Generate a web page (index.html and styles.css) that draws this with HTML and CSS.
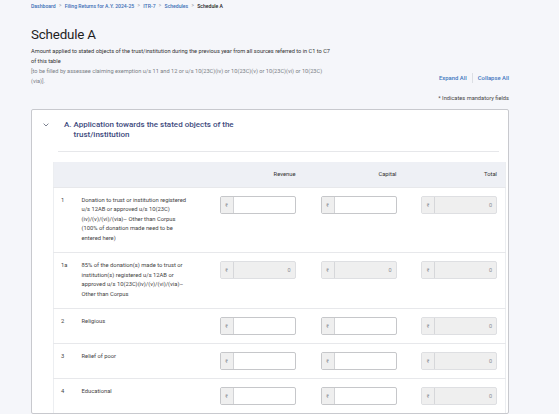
FILE: index.html
```html
<!DOCTYPE html>
<html lang="en">
<head>
<meta charset="utf-8">
<title>Schedule A</title>
<link rel="stylesheet" href="styles.css">
</head>
<body>
<div class="page">
  <nav class="crumbs">
    <a class="crumb">Dashboard</a><span class="sep">&gt;</span>
    <a class="crumb">Filing Returns for A.Y. 2024-25</a><span class="sep">&gt;</span>
    <a class="crumb">ITR-7</a><span class="sep">&gt;</span>
    <a class="crumb">Schedules</a><span class="sep">&gt;</span>
    <span class="crumb-current">Schedule A</span>
  </nav>

  <div class="head">
    <div class="intro">
      <h1 class="title">Schedule A</h1>
      <p class="desc">Amount applied to stated objects of the trust/institution during the previous year from all sources referred to in C1 to C7<br>of this table</p>
      <p class="note">[to be filled by assessee claiming exemption u/s 11 and 12 or u/s 10(23C)(iv) or 10(23C)(v) or 10(23C)(vi) or 10(23C)<br>(via)].</p>
    </div>
    <div class="actions">
      <a class="action">Expand All</a>
      <span class="action-bar"></span>
      <a class="action">Collapse All</a>
    </div>
  </div>

  <p class="mandatory">* Indicates mandatory fields</p>

  <section class="card">
    <div class="card-head">
      <svg class="chevron" viewBox="0 0 6 4" width="6" height="4" aria-hidden="true"><polyline points="0.6,0.6 3,3 5.4,0.6" fill="none" stroke="#5a6275" stroke-width="0.8"/></svg>
      <h2 class="card-title"><span class="card-num">A.</span><span class="card-text">Application towards the stated objects of the<br>trust/institution</span></h2>
    </div>
    <div class="divider"></div>

    <table class="grid">
      <colgroup>
        <col class="c-num"><col class="c-label"><col class="c-val"><col class="c-val"><col class="c-val">
      </colgroup>
      <thead>
        <tr>
          <th></th><th></th><th class="h-val">Revenue</th><th class="h-val">Capital</th><th class="h-val">Total</th>
        </tr>
      </thead>
      <tbody>
        <tr>
          <td class="num">1</td>
          <td class="label">Donation to trust or institution registered<br>u/s 12AB or approved u/s 10(23C)<br>(iv)/(v)/(vi)/(via)– Other than Corpus<br>(100% of donation made need to be<br>entered here)</td>
          <td class="val"><div class="field"><span class="pre">₹</span><span class="in"></span></div></td>
          <td class="val"><div class="field"><span class="pre">₹</span><span class="in"></span></div></td>
          <td class="val"><div class="field off"><span class="pre">₹</span><span class="in">0</span></div></td>
        </tr>
        <tr>
          <td class="num">1a</td>
          <td class="label">85% of the donation(s) made to trust or<br>institution(s) registered u/s 12AB or<br>approved u/s 10(23C)(iv)/(v)/(vi)/(via)–<br>Other than Corpus</td>
          <td class="val"><div class="field off"><span class="pre">₹</span><span class="in">0</span></div></td>
          <td class="val"><div class="field off"><span class="pre">₹</span><span class="in">0</span></div></td>
          <td class="val"><div class="field off"><span class="pre">₹</span><span class="in">0</span></div></td>
        </tr>
        <tr>
          <td class="num">2</td>
          <td class="label">Religious</td>
          <td class="val"><div class="field"><span class="pre">₹</span><span class="in"></span></div></td>
          <td class="val"><div class="field"><span class="pre">₹</span><span class="in"></span></div></td>
          <td class="val"><div class="field off"><span class="pre">₹</span><span class="in">0</span></div></td>
        </tr>
        <tr>
          <td class="num">3</td>
          <td class="label">Relief of poor</td>
          <td class="val"><div class="field"><span class="pre">₹</span><span class="in"></span></div></td>
          <td class="val"><div class="field"><span class="pre">₹</span><span class="in"></span></div></td>
          <td class="val"><div class="field off"><span class="pre">₹</span><span class="in">0</span></div></td>
        </tr>
        <tr>
          <td class="num">4</td>
          <td class="label">Educational</td>
          <td class="val"><div class="field"><span class="pre">₹</span><span class="in"></span></div></td>
          <td class="val"><div class="field"><span class="pre">₹</span><span class="in"></span></div></td>
          <td class="val"><div class="field off"><span class="pre">₹</span><span class="in">0</span></div></td>
        </tr>
      </tbody>
    </table>
  </section>
</div>
</body>
</html>
```

FILE: styles.css
```css
* { box-sizing: border-box; }
html, body { margin: 0; padding: 0; }
body {
  background: #f5f6fa;
  font-family: Roboto, "Liberation Sans", sans-serif;
  color: #333;
  overflow: hidden;
}
.page {
  width: 509px;
  padding: 2px 0 0 31px;
}

/* breadcrumb */
.crumbs {
  display: flex;
  align-items: center;
  height: 8px;
  font-size: 5.1px;
  line-height: 8px;
  white-space: nowrap;
}
.crumb { color: #3a6db5; font-weight: 500; }
.crumb-current { color: #222; font-weight: 500; }
.sep { color: #8a8f99; margin: 0 3.3px; font-size: 4.6px; }

/* heading block */
.head {
  display: flex;
  justify-content: space-between;
  align-items: flex-end;
}
.title {
  margin: 16px 0 0;
  font-size: 13.4px;
  line-height: 17px;
  font-weight: 400;
  letter-spacing: -0.2px;
  color: #1e1e1e;
}
.desc, .note {
  margin: 0;
  font-size: 5.65px;
  line-height: 10px;
  white-space: nowrap;
}
.desc { margin-top: 3px; color: #333; }
.note { color: #7b7f86; }
.actions {
  display: flex;
  align-items: center;
  height: 10px;
  margin-bottom: 3px;
  font-size: 5.9px;
}
.action { color: #3f77c0; font-weight: 500; }
.action-bar {
  width: 1px;
  height: 10px;
  background: #dcdfe4;
  margin: 0 5px;
}
.mandatory {
  margin: 7px 0 0;
  text-align: right;
  font-size: 5.7px;
  line-height: 10px;
  color: #444;
}

/* card */
.card {
  margin-top: 6px;
  background: #fff;
  border: 1px solid #c8c9ce;
  border-radius: 2px;
  padding: 10px 2px 0 21px;
}
.card-head {
  display: flex;
  align-items: flex-start;
}
.chevron {
  margin: 3px 0 0 -10px;
  width: 6px;
  height: 4px;
  flex: none;
}
.card-title {
  display: flex;
  margin: 0 0 0 15px;
  font-size: 8px;
  line-height: 9.5px;
  font-weight: 500;
  color: #3d4a7d;
  white-space: nowrap;
}
.card-num { width: 9.5px; flex: none; }
.divider {
  height: 1px;
  background: #e6e7ea;
  margin: 12px 7px 0 5px;
}

/* table */
.grid {
  margin-top: 10px;
  width: 452px;
  border-collapse: collapse;
  table-layout: fixed;
  font-size: 5.8px;
  color: #444;
  border-left: 1px solid #eceef1;
  border-right: 1px solid #eceef1;
}
.c-num { width: 20px; }
.c-label { width: 129px; }
.c-val { width: 101px; }
.grid thead tr { background: #eef0f5; }
.grid th {
  height: 25px;
  padding: 0 8px 0 0;
  font-weight: 400;
  color: #333;
  text-align: right;
}
.grid td {
  vertical-align: top;
  border-top: 1px solid #e7e8eb;
}
.grid td.num { padding: 8px 0 9px 7px; line-height: 9.5px; }
.grid td.label { padding: 8px 4px 9px 8px; line-height: 9.5px; white-space: nowrap; }
.grid td.val { padding: 8px 8px 8px 0; }

.field {
  display: flex;
  width: 76px;
  height: 18px;
  margin-left: auto;
  border: 1px solid #c6c7ca;
  border-radius: 2px;
  background: #fff;
  overflow: hidden;
}
.pre {
  flex: none;
  width: 13px;
  display: flex;
  align-items: center;
  justify-content: center;
  background: #efefef;
  border-right: 1px solid #d2d3d6;
  color: #858890;
  font-size: 5px;
}
.in {
  flex: 1;
  display: flex;
  align-items: center;
  justify-content: flex-end;
  padding-right: 4px;
  color: #8a8d93;
  font-size: 5.5px;
}
.field.off {
  background: #efefef;
  border-color: #dedfe2;
}
.field.off .pre { border-right-color: #d6d7da; }
```
